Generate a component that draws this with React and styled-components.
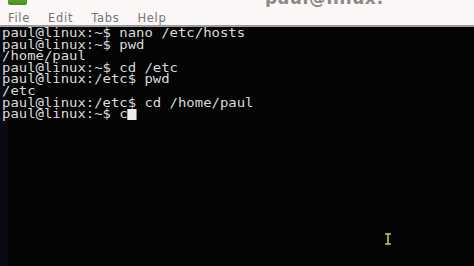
import React from "react";
import styled, { createGlobalStyle } from "styled-components";

const Global = createGlobalStyle`
  html, body { margin: 0; padding: 0; background: #040404; }
  body { width: 474px; height: 266px; overflow: hidden; }
`;

const Window = styled.div`
  position: relative;
  display: flex;
  flex-direction: column;
  width: 474px;
  height: 266px;
  overflow: hidden;
`;

const TopBar = styled.div`
  display: flex;
  flex-direction: column;
  height: 25px;
  background: #fcf7f7;
  border-bottom: 2px solid #9c9c9c;
  box-sizing: content-box;
`;

const TitleRow = styled.div`
  display: grid;
  grid-template-columns: 8px 19px 238px auto;
  height: 8px;
  overflow: hidden;
`;

const AppIcon = styled.div`
  grid-column: 2;
  height: 5px;
  background: linear-gradient(#5c9f2c, #4a8a22);
  border-radius: 0 0 2px 2px;
`;

const Title = styled.div`
  grid-column: 4;
  margin-top: -12px;
  font-family: "DejaVu Sans", sans-serif;
  font-weight: bold;
  font-size: 17px;
  line-height: 20px;
  color: #8c8888;
  letter-spacing: 0.6px;
  white-space: nowrap;
`;

const MenuRow = styled.div`
  display: flex;
  gap: 18px;
  padding: 4px 0 0 8px;
`;

const MenuItem = styled.span`
  font-family: "DejaVu Sans", sans-serif;
  font-size: 11.5px;
  line-height: 14px;
  color: #747474;
  letter-spacing: 0.7px;
`;

const Terminal = styled.div`
  flex: 1;
  background: linear-gradient(to right, #0a0a12 8px, #040404 8px);
  padding: 1px 0 0 2px;
`;

const Lines = styled.div`
  font-family: "DejaVu Sans Mono", monospace;
  font-size: 12px;
  line-height: 11.6px;
  color: #dadada;
  white-space: pre;
  transform: scaleX(1.16);
  transform-origin: left top;
`;

const Line = styled.div`
  height: 11.6px;
`;

const Cursor = styled.span`
  display: inline-block;
  width: 7.2px;
  height: 11px;
  background: #ececec;
  vertical-align: -2px;
`;

const IBeam = styled.svg`
  position: absolute;
  left: 384px;
  top: 233px;
`;

const lines = [
  "paul@linux:~$ nano /etc/hosts",
  "paul@linux:~$ pwd",
  "/home/paul",
  "paul@linux:~$ cd /etc",
  "paul@linux:/etc$ pwd",
  "/etc",
  "paul@linux:/etc$ cd /home/paul",
];

export default function App() {
  return (
    <>
      <Global />
      <Window>
        <TopBar>
          <TitleRow>
            <AppIcon />
            <Title>paul@linux: ~</Title>
          </TitleRow>
          <MenuRow>
            <MenuItem>File</MenuItem>
            <MenuItem>Edit</MenuItem>
            <MenuItem>Tabs</MenuItem>
            <MenuItem>Help</MenuItem>
          </MenuRow>
        </TopBar>
        <Terminal>
          <Lines>
            {lines.map((l, i) => (
              <Line key={i}>{l}</Line>
            ))}
            <Line>
              paul@linux:~$ c<Cursor />
            </Line>
          </Lines>
        </Terminal>
        <IBeam width="8" height="12" viewBox="0 0 8 12">
          <path d="M1 1h6M4 1v10M1 11h6" stroke="#c6cf3c" strokeWidth="1.6" fill="none" />
        </IBeam>
      </Window>
    </>
  );
}
